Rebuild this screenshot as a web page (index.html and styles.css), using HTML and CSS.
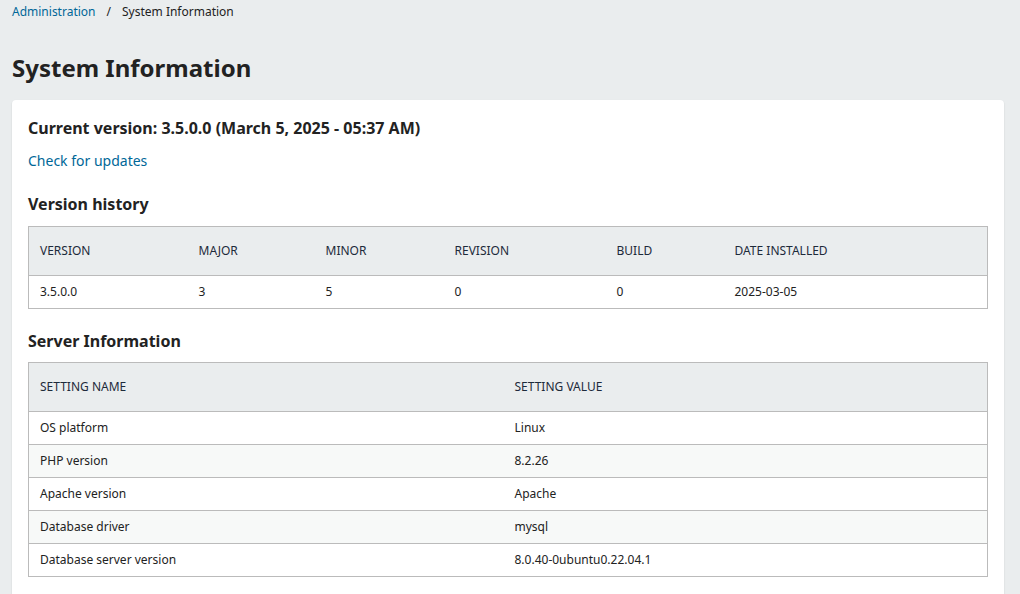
FILE: index.html
```html
<!DOCTYPE html>
<html>
<head>
<meta charset="utf-8">
<link rel="stylesheet" href="styles.css">
</head>
<body>
<div class="page">
  <nav class="breadcrumbs">
    <a class="crumb-link" href="#">Administration</a>
    <span class="sep">/</span>
    <span class="crumb-current">System Information</span>
  </nav>
  <h1 class="page-title">System Information</h1>
  <div class="panel">
    <h2 class="current">Current version: 3.5.0.0 (March 5, 2025 - 05:37 AM)</h2>
    <a class="link" href="#">Check for updates</a>
    <h3 class="section-title">Version history</h3>
    <table class="table">
      <colgroup>
        <col class="v1"><col class="v2"><col class="v3"><col class="v4"><col class="v5"><col>
      </colgroup>
      <thead>
        <tr><th>Version</th><th>Major</th><th>Minor</th><th>Revision</th><th>Build</th><th>Date installed</th></tr>
      </thead>
      <tbody>
        <tr><td>3.5.0.0</td><td>3</td><td>5</td><td>0</td><td>0</td><td>2025-03-05</td></tr>
      </tbody>
    </table>
    <h3 class="section-title second">Server Information</h3>
    <table class="table striped">
      <colgroup><col class="s1"><col></colgroup>
      <thead>
        <tr><th>Setting name</th><th>Setting value</th></tr>
      </thead>
      <tbody>
        <tr><td>OS platform</td><td>Linux</td></tr>
        <tr><td>PHP version</td><td>8.2.26</td></tr>
        <tr><td>Apache version</td><td>Apache</td></tr>
        <tr><td>Database driver</td><td>mysql</td></tr>
        <tr><td>Database server version</td><td>8.0.40-0ubuntu0.22.04.1</td></tr>
      </tbody>
    </table>
  </div>
</div>
</body>
</html>
```

FILE: styles.css
```css
html, body {
  margin: 0;
  padding: 0;
  background: #eaedee;
  font-family: "Noto Sans", "Liberation Sans", sans-serif;
  color: #222;
}
.page {
  padding: 2px 16px 0 12px;
}
.breadcrumbs {
  font-size: 12px;
  line-height: 20px;
  display: flex;
  align-items: center;
}
.crumb-link {
  color: #006798;
  text-decoration: none;
}
.sep {
  margin: 0 11px 0 11px;
  color: #222;
}
.page-title {
  margin: 31px 0 0;
  font-size: 24px;
  line-height: 30px;
  font-weight: 700;
}
.panel {
  margin-top: 17px;
  background: #fff;
  border-radius: 4px;
  box-shadow: 0 1px 2px rgba(0,0,0,0.12);
  padding: 18px 16px 40px;
  min-height: 500px;
}
.current {
  margin: 0;
  font-size: 16px;
  line-height: 20px;
  font-weight: 700;
}
.link {
  display: block;
  margin-top: 13px;
  font-size: 14px;
  line-height: 20px;
  color: #006798;
  text-decoration: none;
}
.section-title {
  margin: 23px 0 12px;
  font-size: 16px;
  line-height: 20px;
  font-weight: 700;
}
.section-title.second {
  margin-top: 22px;
  margin-bottom: 11px;
}
.table {
  width: 100%;
  border-collapse: collapse;
  border: 1px solid #bbb;
  font-size: 12px;
  line-height: 20px;
}
.table th {
  background: #eaedee;
  font-size: 12px;
  font-weight: 400;
  text-transform: uppercase;
  text-align: left;
  padding: 14px 12px 14px 11px;
  border-bottom: 1px solid #bbb;
  color: #1d2a3a;
}
.table td {
  padding: 6px 12px 6px 11px;
  border-top: 1px solid #bbb;
}
.striped tbody tr:nth-child(even) td {
  background: #f7f9f8;
}
.v1 { width: 159px; }
.v2 { width: 127px; }
.v3 { width: 129px; }
.v4 { width: 162px; }
.v5 { width: 118px; }
.s1 { width: 475px; }
```
